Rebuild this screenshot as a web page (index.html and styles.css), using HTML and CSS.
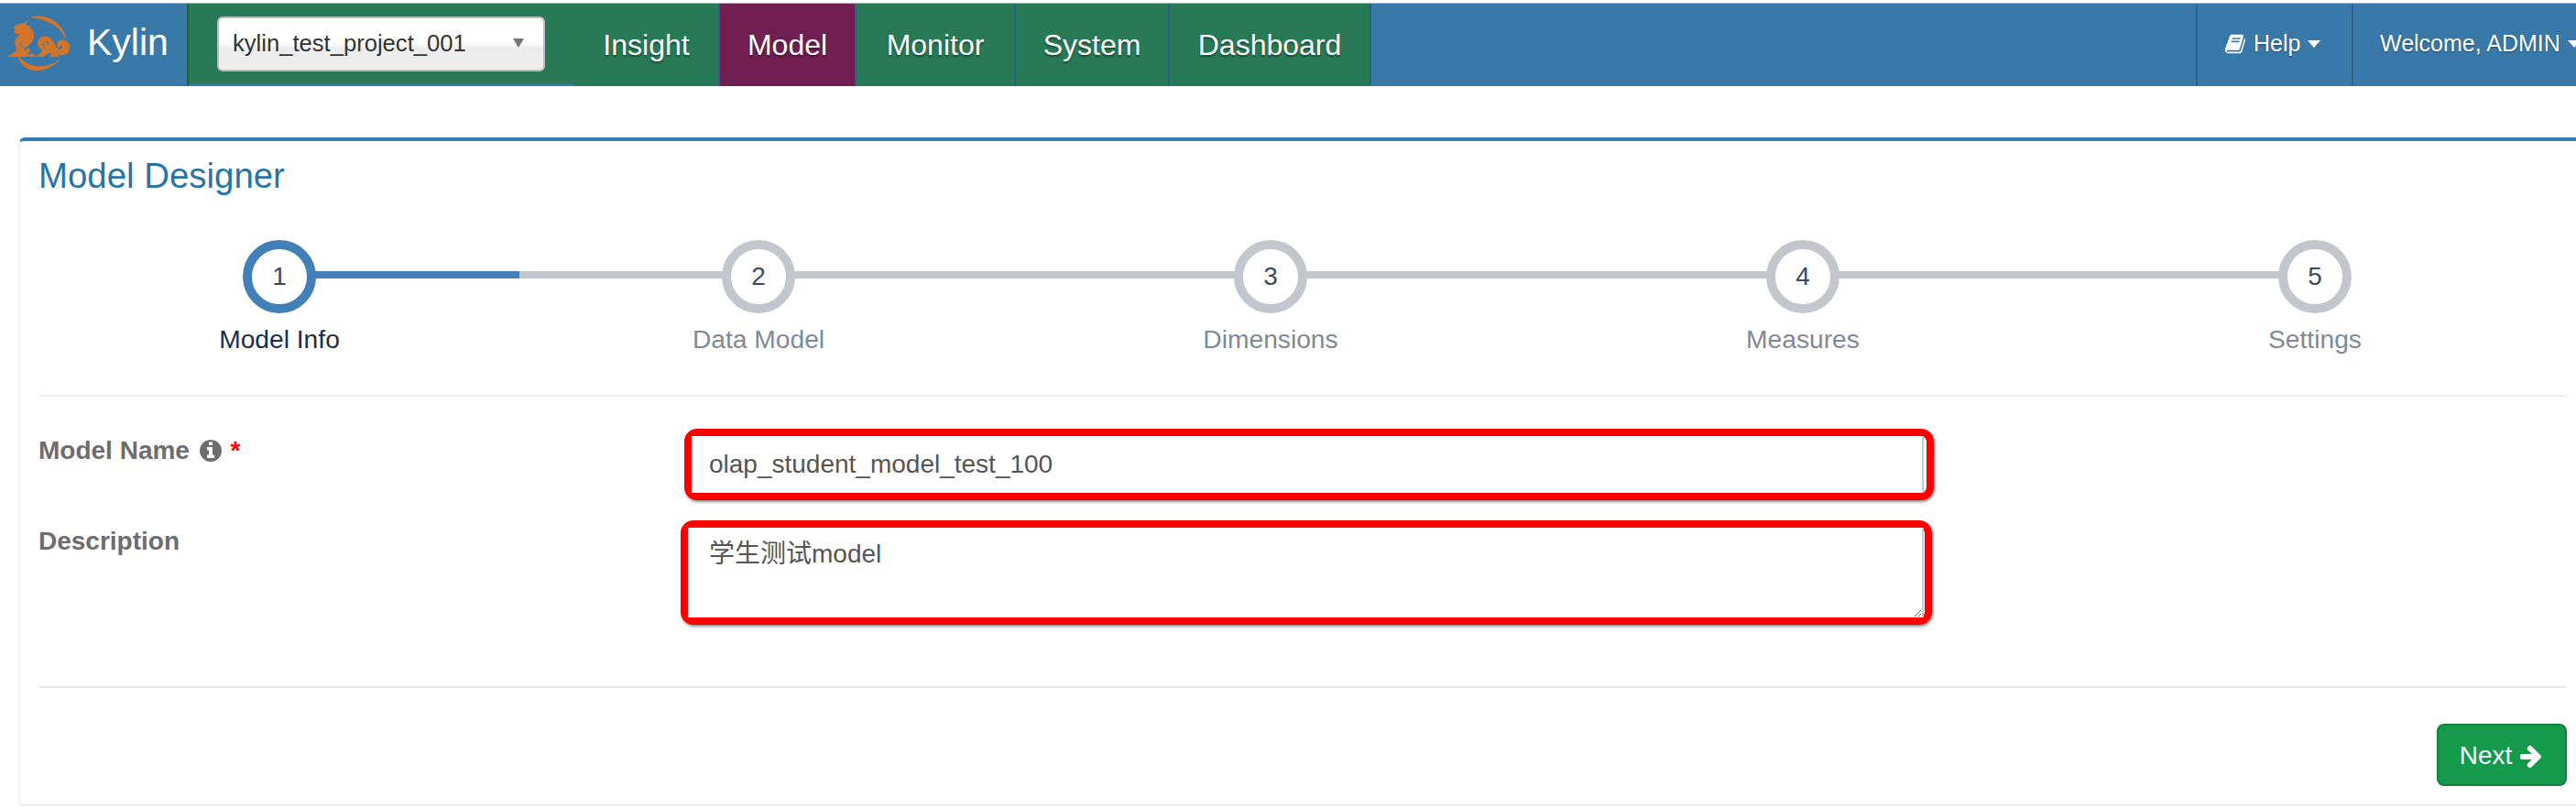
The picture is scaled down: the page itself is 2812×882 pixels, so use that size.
FILE: index.html
```html
<!DOCTYPE html>
<html lang="en">
<head>
<meta charset="utf-8">
<title>Kylin Model Designer</title>
<link rel="stylesheet" href="styles.css">
</head>
<body>
<header class="topbar">
  <a class="brand">
    <svg class="brand-logo" viewBox="0 0 240 225" aria-hidden="true">
      <path class="logo-fill" d="M88 26C132 16 186 40 199 92 182 56 140 33 88 26Z"/>
      <path class="logo-fill" d="M47 157C58 208 128 218 182 164 140 199 80 196 47 157Z"/>
      <path class="logo-fill" d="M74 38L68 52C84 56 96 72 94 92 92 108 80 118 70 122 62 126 60 134 66 136 72 136 74 128 80 128 84 134 80 146 68 148L82 150 76 155H12L30 144C42 138 42 128 36 116 32 100 42 92 52 80 44 82 36 80 30 74L36 68 30 60C42 52 54 46 66 48Z"/>
      <path class="logo-fill" d="M80 154L88 146 104 154Z"/>
      <path class="logo-fill" d="M108 155C114 146 126 140 122 132 112 128 106 112 112 100 122 86 146 86 156 102 164 118 170 130 178 132 186 134 192 128 190 122 186 116 178 120 176 126 168 114 176 100 192 102 208 104 216 118 212 132 206 150 184 154 170 146L178 155H148L156 144C150 140 144 140 138 146L128 155Z"/>
      <path class="logo-line" d="M132 128C122 122 124 104 138 106 146 108 144 120 136 118"/>
      <path class="logo-line" d="M54 108C48 116 52 126 60 122"/>
    </svg>
    <span class="brand-name">Kylin</span>
  </a>
  <div class="project">
    <div class="project-select">
      <span class="project-name">kylin_test_project_001</span>
      <span class="project-caret"></span>
    </div>
  </div>
  <nav class="tabs">
    <a class="tab">Insight</a>
    <a class="tab tab-active">Model</a>
    <a class="tab">Monitor</a>
    <a class="tab">System</a>
    <a class="tab">Dashboard</a>
  </nav>
  <div class="topbar-right">
    <a class="menu menu-help">
      <svg class="book-icon" viewBox="0 0 1792 1792" aria-hidden="true"><path d="M1703 478q40 57 18 129l-275 906q-19 64-76.5 107.5t-122.5 43.5h-923q-77 0-148.5-53.5t-99.5-131.5q-24-67-2-127 0-4 3-27t4-37q1-8-3-21.5t-3-19.5q2-11 8-21t16.5-23.5 16.5-23.5q23-38 45-91.5t30-91.5q3-10 .5-30t-.5-28q3-11 17-28t17-23q21-36 42-92t25-90q1-9-2.5-32t.5-28q4-13 22-30.5t22-22.5q19-26 42.5-84.5t27.5-96.5q1-8-3-25.5t-2-26.5q2-8 9-18t18-23 17-21q8-12 16.5-30.5t15-35 16-36 19.5-32 26.5-23.5 36-11.5 47.5 5.5l-1 3q38-9 51-9h761q74 0 114 56t18 130l-274 906q-36 119-71.5 153.5t-128.5 34.5h-869q-27 0-38 15-11 16-1 43 24 70 144 70h923q29 0 56-15.5t35-41.5l300-987q7-22 5-57 38 15 59 43zm-1064 2q-4 13 2 22.5t20 9.5h608q13 0 25.5-9.5t16.5-22.5l21-64q4-13-2-22.5t-20-9.5h-608q-13 0-25.5 9.5t-16.5 22.5zm-83 256q-4 13 2 22.5t20 9.5h608q13 0 25.5-9.5t16.5-22.5l21-64q4-13-2-22.5t-20-9.5h-608q-13 0-25.5 9.5t-16.5 22.5z"/></svg>
      <span>Help</span>
      <span class="menu-caret"></span>
    </a>
    <a class="menu menu-user">
      <span>Welcome, ADMIN</span>
      <span class="menu-caret"></span>
    </a>
  </div>
</header>

<main class="page">
  <section class="panel">
    <h1 class="panel-title">Model Designer</h1>

    <ol class="steps">
      <li class="step step-active"><span class="step-dot">1</span><span class="step-label">Model Info</span></li>
      <li class="step"><span class="step-dot">2</span><span class="step-label">Data Model</span></li>
      <li class="step"><span class="step-dot">3</span><span class="step-label">Dimensions</span></li>
      <li class="step"><span class="step-dot">4</span><span class="step-label">Measures</span></li>
      <li class="step"><span class="step-dot">5</span><span class="step-label">Settings</span></li>
    </ol>

    <hr class="rule">

    <form class="form">
      <div class="form-row">
        <label class="form-label">Model Name
          <svg class="info-icon" viewBox="128 128 1536 1536" aria-hidden="true"><path d="M1152 1376v-160q0-14-9-23t-23-9h-96v-512q0-14-9-23t-23-9h-320q-14 0-23 9t-9 23v160q0 14 9 23t23 9h96v320h-96q-14 0-23 9t-9 23v160q0 14 9 23t23 9h448q14 0 23-9t9-23zm-128-896v-160q0-14-9-23t-23-9h-192q-14 0-23 9t-9 23v160q0 14 9 23t23 9h192q14 0 23-9t9-23zm640 416q0 209-103 385.5t-279.5 279.5-385.5 103-385.5-103-279.5-279.5-103-385.5 103-385.5 279.5-279.5 385.5-103 385.5 103 279.5 279.5 103 385.5z"/></svg>
          <span class="required">*</span>
        </label>
        <div class="mark mark-input">
          <input class="control control-input" type="text" value="olap_student_model_test_100">
        </div>
      </div>
      <div class="form-row form-row-desc">
        <label class="form-label form-label-desc">Description</label>
        <div class="mark mark-area">
          <textarea class="control control-area">学生测试model</textarea>
        </div>
      </div>
    </form>

    <hr class="rule rule-foot">

    <div class="actions">
      <button class="next" type="button">Next
        <svg class="next-icon" viewBox="0 0 1792 1792" aria-hidden="true"><path d="M1600 960q0 54-37 91l-651 651q-39 37-91 37-51 0-90-37l-75-75q-38-38-38-91t38-91l293-293h-704q-52 0-84.5-37.5t-32.5-90.5v-128q0-53 32.5-90.5t84.5-37.5h704l-293-294q-38-36-38-90t38-90l75-75q38-38 90-38 53 0 91 38l651 651q37 35 37 90z"/></svg>
      </button>
    </div>
  </section>
</main>
</body>
</html>
```
FILE: styles.css
```css
* { box-sizing: border-box; }

html, body {
  margin: 0;
  height: 100%;
  overflow: hidden;
  background: #fff;
}

body {
  padding-top: 3px;
  font-family: "Liberation Sans", Arial, "Noto Sans CJK SC", sans-serif;
  font-size: 28px;
  color: #333;
}

/* Top bar */
.topbar {
  display: flex;
  height: 91px;
  border-top: 1px solid #b4b4b4;
  background: #3879aa;
  color: #fff;
}

.brand {
  display: flex;
  align-items: flex-start;
  width: 204px;
  padding: 6px 0 0 5px;
}

.brand-logo { width: 80px; height: 75px; flex: none; }
.logo-fill { fill: #d2742a; stroke: #d2742a; stroke-width: 3; stroke-linejoin: round; }
.logo-line { fill: none; stroke: #3879aa; stroke-width: 3; stroke-linecap: round; }

.brand-name {
  margin-left: 10px;
  padding-top: 6px;
  font-size: 41px;
  line-height: 60px;
}

.project {
  width: 423px;
  padding-top: 14px;
  padding-left: 31px;
  background: #287a56;
  border-left: 2px solid #1f5f45;
  box-shadow: inset 0 -2px 0 #337ab7;
}

.project-select {
  display: flex;
  align-items: center;
  justify-content: space-between;
  width: 358px;
  height: 60px;
  padding: 0 21px 2px 15px;
  border: 2px solid #bcbcbc;
  border-radius: 6px;
  background: linear-gradient(#fff 45%, #ececec 60%, #eee);
  color: #333;
}

.project-name { font-size: 25.6px; }

.project-caret {
  width: 0;
  height: 0;
  border-left: 6.5px solid transparent;
  border-right: 6.5px solid transparent;
  border-top: 10px solid #777;
}

.tabs {
  display: grid;
  grid-template-columns: 159px 149px 174px 168px 220px;
}

.tab {
  display: flex;
  align-items: center;
  justify-content: center;
  padding-top: 1px;
  background: #287a56;
  border-right: 2px solid #27608a;
  font-size: 32px;
  text-shadow: 0 2px 2px rgba(0, 0, 0, .4);
}

.tab-active { background: #711f52; }

.topbar-right {
  display: flex;
  margin-left: auto;
  width: 415px;
  flex: none;
}

.menu {
  display: flex;
  align-items: center;
  padding-left: 29px;
  padding-bottom: 3px;
  border-left: 2px solid #2b6488;
  font-size: 25px;
  white-space: nowrap;
  text-shadow: 0 1px 2px rgba(0, 0, 0, .4);
}

.menu-help { width: 170px; flex: none; }
.menu-user { flex: 1; }

.book-icon { width: 24px; height: 24px; fill: #fff; margin-right: 8px; flex: none; }

.menu-caret {
  flex: none;
  width: 0;
  height: 0;
  margin-left: 8px;
  border-left: 7.5px solid transparent;
  border-right: 7.5px solid transparent;
  border-top: 8px solid #fff;
}

/* Page */
.page { padding: 56px 0 0 21px; }

.panel {
  height: 728px;
  padding: 0 10px 20px 20px;
  border-top: 4px solid #337ab7;
  border-left: 1px solid #eee;
  border-radius: 6px 0 0 0;
  box-shadow: 0 1px 2px rgba(0, 0, 0, .14);
}

.panel-title {
  margin: 16px 0 0;
  font-size: 38.4px;
  font-weight: 400;
  line-height: 44px;
  color: #2a73a5;
}

/* Steps */
.steps {
  display: grid;
  grid-template-columns: 524px 522px 596px 566px 552px;
  margin: 48px 0 0 1px;
  padding: 0;
  list-style: none;
}

.step {
  position: relative;
  display: flex;
  flex-direction: column;
  align-items: center;
}

.step::before,
.step::after {
  content: "";
  position: absolute;
  top: 34px;
  width: 50%;
  height: 8px;
  background: #c2c7ce;
}

.step::before { left: 0; }
.step::after { right: 0; }
.step:first-child::before,
.step:last-child::after { display: none; }
.step-active::after { background: #4380b8; }

.step-dot {
  position: relative;
  z-index: 1;
  display: flex;
  align-items: center;
  justify-content: center;
  width: 80px;
  height: 80px;
  border: 10px solid #c2c7ce;
  border-radius: 50%;
  background: #fff;
  color: #3d4a5c;
}

.step-active .step-dot { border-color: #4380b8; }

.step-label {
  margin-top: 10px;
  margin-bottom: 1px;
  font-size: 28.2px;
  line-height: 36px;
  color: #7f8a96;
}

.step-active .step-label { color: #1f2d45; }

.rule {
  height: 2px;
  margin: 42px 0 0 1px;
  border: 0;
  background: #eaeaea;
}

/* Form */
.form { margin-top: 35px; }

.form-row {
  display: grid;
  grid-template-columns: 705px 1364px;
}

.form-row-desc {
  grid-template-columns: 701px 1366px;
  margin-top: 22px;
}

.form-label {
  padding-top: 4px;
  font-weight: 700;
  line-height: 40px;
  color: #6d6d6d;
}

.form-label-desc { padding-top: 3px; }

.info-icon {
  width: 24px;
  height: 24px;
  margin: 0 2px 0 3px;
  vertical-align: -3px;
  fill: #6d6d6d;
}

.required { color: #f00; }

.mark {
  display: flex;
  padding-right: 3px;
  border: 8px solid #f00;
  border-radius: 14px;
  background: #fff;
  box-shadow: 1px 2px 3px rgba(0, 0, 0, .45);
}

.mark-input { height: 78px; }
.mark-area { height: 114px; padding-right: 1px; }

.control {
  display: block;
  width: 100%;
  margin: 0;
  border: 0;
  border-right: 2px solid #c5ced8;
  outline: 0;
  background: #fff;
  font-family: "Liberation Sans", Arial, "Noto Sans CJK SC", sans-serif;
  font-size: 28px;
  color: #555;
}

.control-input { height: 100%; padding: 3px 0 3px 19px; }

.control-area {
  height: 100%;
  padding: 12px 0 0 23px;
  line-height: 34px;
  resize: both;
}

.rule-foot { margin-top: 67px; }

/* Actions */
.actions {
  display: flex;
  justify-content: flex-end;
  margin-top: 39px;
}

.next {
  display: flex;
  align-items: center;
  justify-content: center;
  gap: 7px;
  width: 142px;
  height: 68px;
  padding: 2px 0 0;
  border: 2px solid #128040;
  border-radius: 8px;
  background: #149a4a;
  font-family: "Liberation Sans", Arial, sans-serif;
  font-size: 28px;
  color: #fff;
}

.next-icon { width: 28px; height: 28px; fill: #fff; flex: none; }
```
